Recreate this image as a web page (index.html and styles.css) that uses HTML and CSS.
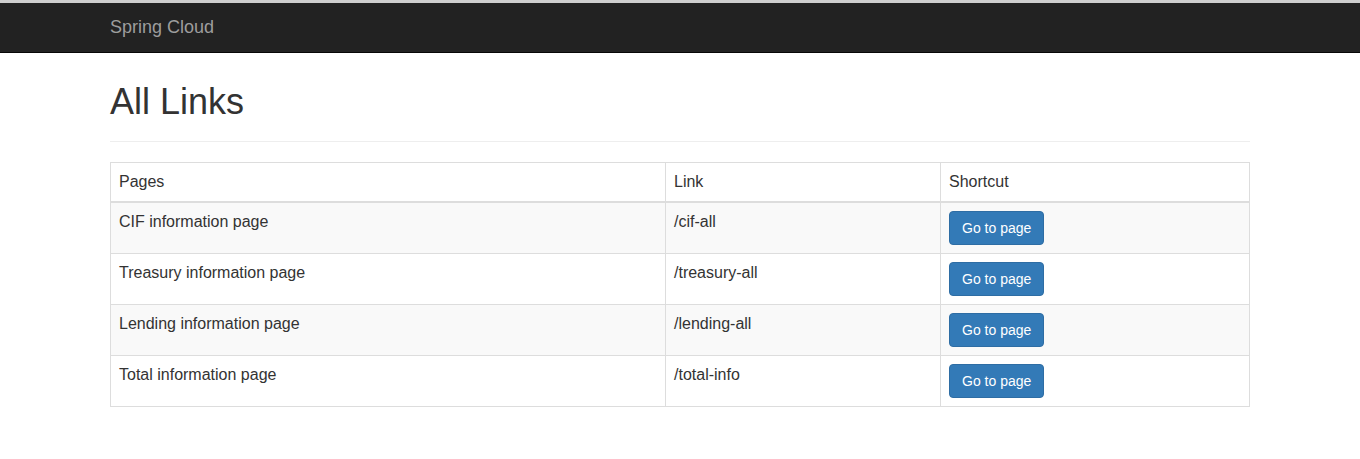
FILE: index.html
```html
<!DOCTYPE html>
<html>
<head>
<meta charset="utf-8">
<title>All Links</title>
<link rel="stylesheet" href="styles.css">
</head>
<body>
<nav class="navbar">
  <div class="container">
    <a class="brand" href="#">Spring Cloud</a>
  </div>
</nav>
<div class="container">
  <div class="page-header">
    <h1>All Links</h1>
  </div>
  <table class="links">
    <thead>
      <tr>
        <th class="c1">Pages</th>
        <th class="c2">Link</th>
        <th class="c3">Shortcut</th>
      </tr>
    </thead>
    <tbody>
      <tr>
        <td>CIF information page</td>
        <td>/cif-all</td>
        <td class="act"><a class="btn" href="#">Go to page</a></td>
      </tr>
      <tr>
        <td>Treasury information page</td>
        <td>/treasury-all</td>
        <td class="act"><a class="btn" href="#">Go to page</a></td>
      </tr>
      <tr>
        <td>Lending information page</td>
        <td>/lending-all</td>
        <td class="act"><a class="btn" href="#">Go to page</a></td>
      </tr>
      <tr>
        <td>Total information page</td>
        <td>/total-info</td>
        <td class="act"><a class="btn" href="#">Go to page</a></td>
      </tr>
    </tbody>
  </table>
</div>
</body>
</html>
```
FILE: styles.css
```css
* { box-sizing: border-box; }
html, body { margin: 0; padding: 0; }
body {
  font-family: "Liberation Sans", Arial, Helvetica, sans-serif;
  font-size: 14px;
  line-height: 1.42857143;
  color: #333;
  background: #fff;
  border-top: 3px solid #cfcfcf;
}
.container {
  width: 1170px;
  margin: 0 auto;
  padding: 0 15px;
}
.navbar {
  background: #222;
  border-bottom: 1px solid #080808;
  height: 50px;
}
.brand {
  display: inline-block;
  height: 49px;
  padding: 14px 0;
  font-size: 18px;
  line-height: 20px;
  color: #9d9d9d;
  text-decoration: none;
}
.page-header {
  padding-bottom: 9px;
  margin: 0 0 20px;
  border-bottom: 1px solid #eee;
}
.page-header h1 {
  margin: 29px 0 10px;
  font-size: 36px;
  font-weight: 500;
  line-height: 1.1;
}
.links {
  width: 100%;
  border-collapse: collapse;
  border-spacing: 0;
  border: 1px solid #ddd;
  table-layout: fixed;
  font-size: 16px;
}
.links th, .links td {
  padding: 8px;
  text-align: left;
  vertical-align: top;
  border: 1px solid #ddd;
  line-height: 1.42857143;
}
.links th {
  font-weight: normal;
  border-bottom: 2px solid #ddd;
  vertical-align: bottom;
}
.links td.act {
  font-size: 14px;
  line-height: 20px;
}
.c1 { width: 555px; }
.c2 { width: 275px; }
.links tbody tr:nth-child(odd) { background: #f9f9f9; }
.btn {
  display: inline-block;
  padding: 6px 12px;
  font-size: 14px;
  line-height: 20px;
  color: #fff;
  background: #337ab7;
  border: 1px solid #2e6da4;
  border-radius: 4px;
  text-decoration: none;
  vertical-align: middle;
}
```
